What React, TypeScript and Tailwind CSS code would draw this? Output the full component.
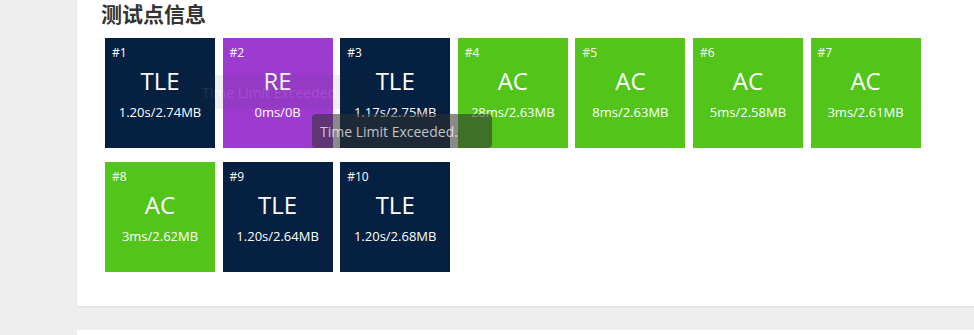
import React from "react";

type Point = { id: number; status: "AC" | "TLE" | "RE"; info: string };

const points: Point[] = [
  { id: 1, status: "TLE", info: "1.20s/2.74MB" },
  { id: 2, status: "RE", info: "0ms/0B" },
  { id: 3, status: "TLE", info: "1.17s/2.75MB" },
  { id: 4, status: "AC", info: "28ms/2.63MB" },
  { id: 5, status: "AC", info: "8ms/2.63MB" },
  { id: 6, status: "AC", info: "5ms/2.58MB" },
  { id: 7, status: "AC", info: "3ms/2.61MB" },
  { id: 8, status: "AC", info: "3ms/2.62MB" },
  { id: 9, status: "TLE", info: "1.20s/2.64MB" },
  { id: 10, status: "TLE", info: "1.20s/2.68MB" },
];

const colors = {
  AC: "bg-[#52c41a]",
  TLE: "bg-[#052041]",
  RE: "bg-[#9d3bd0]",
};

const Tooltip = ({ className }: { className: string }) => (
  <div
    className={
      "absolute w-[180px] h-[34px] rounded-[4px] bg-[rgba(50,50,50,0.57)] flex items-center pl-[8px] text-[14px] text-[rgba(255,255,255,0.72)] pointer-events-none " +
      className
    }
  >
    Time Limit Exceeded.
  </div>
);

const App = () => {
  return (
    <div
      className="min-h-[335px] bg-[#eeeeee] pl-[77px] flex flex-col"
      style={{ fontFamily: '"Open Sans", "Noto Sans CJK SC", sans-serif' }}
    >
      <div className="relative bg-white shadow-[0_1px_2px_rgba(0,0,0,0.08)] pl-[24px] pb-[34px]">
        <h2
          className="text-[21px] leading-[24px] font-bold text-[#333] h-[24px] pt-[1px]"
          style={{ fontFamily: '"Noto Sans CJK SC", sans-serif' }}
        >
          测试点信息
        </h2>
        <div className="mt-[14px] ml-[4px] w-[820px] flex flex-wrap gap-x-[7.6px] gap-y-[14px]">
          {points.map((p) => (
            <div key={p.id} className={"w-[110px] h-[110px] text-white flex flex-col " + colors[p.status]}>
              <div className="pt-[7px] pl-[7px] text-[12px] leading-[16px] font-medium">#{p.id}</div>
              <div className="mt-[4px] text-center text-[24px] leading-[32px]">{p.status}</div>
              <div className="mt-[6px] text-center text-[13px] leading-[18px]">{p.info}</div>
            </div>
          ))}
        </div>
        <Tooltip className="left-[117px] top-[75px] opacity-[0.13]" />
        <Tooltip className="left-[235px] top-[114px]" />
      </div>
      <div className="mt-[24px] flex-1 bg-white min-h-[5px]" />
    </div>
  );
};

export default App;
